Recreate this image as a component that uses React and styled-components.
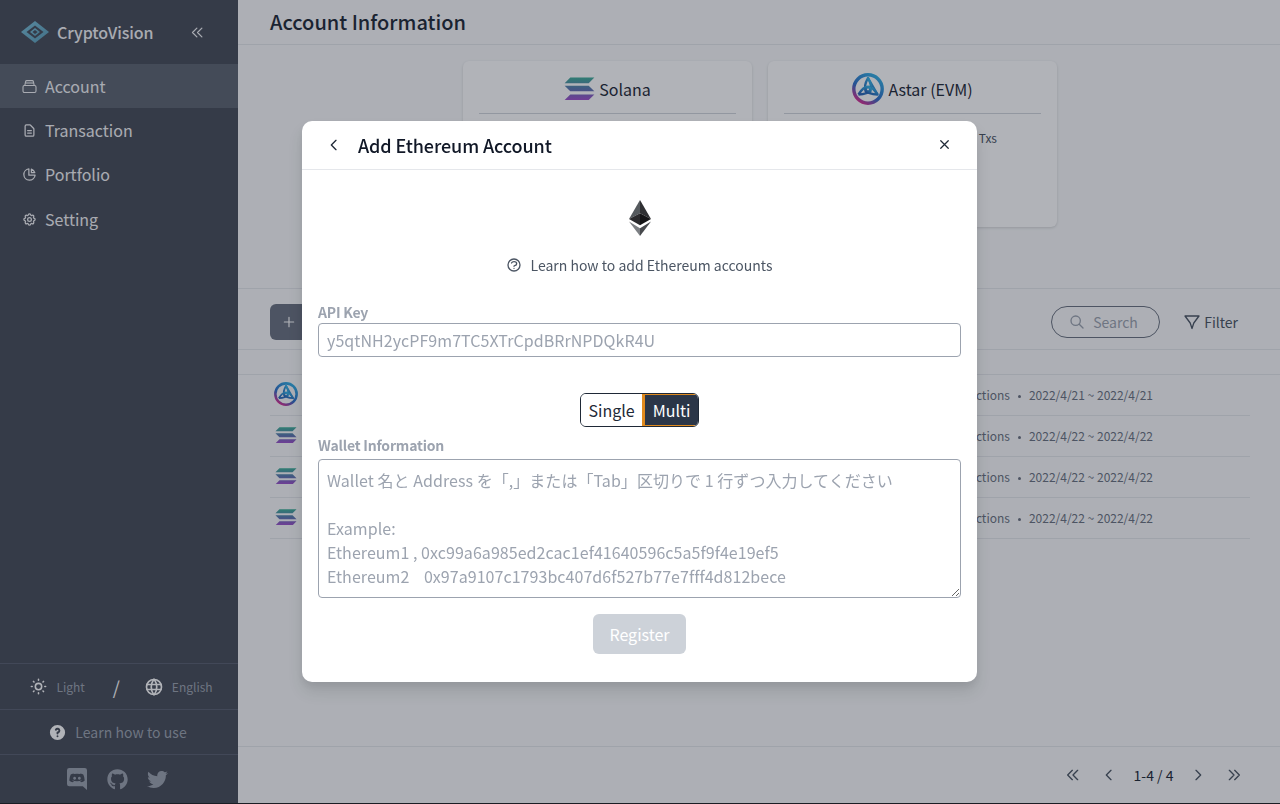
import React from 'react'
import styled, { createGlobalStyle } from 'styled-components'
import { FaGithub, FaTwitter } from 'react-icons/fa'
import {
  HiOutlineChevronDoubleLeft,
  HiOutlineChevronDoubleRight,
  HiOutlineChevronLeft,
  HiOutlineChevronRight,
  HiOutlineDocumentText,
  HiOutlineChartPie,
  HiOutlineCog,
  HiOutlineSun,
  HiOutlineQuestionMarkCircle,
  HiQuestionMarkCircle,
  HiOutlineX,
  HiOutlinePlus,
  HiOutlineSearch,
} from 'react-icons/hi'
import { TbWorld } from 'react-icons/tb'

const FONT = '"Noto Sans CJK JP", "Noto Sans", sans-serif'

const GlobalStyle = createGlobalStyle`
  html, body {
    margin: 0;
    height: 100%;
    background: #1a1d24;
  }
  body {
    font-family: ${FONT};
    color: #1f2937;
    overflow: hidden;
  }
  * {
    box-sizing: border-box;
  }
`

const LogoMark = () => (
  <svg width="28" height="24" viewBox="0 0 28 24">
    <defs>
      <linearGradient id="logoGrad" x1="0" y1="0" x2="1" y2="1">
        <stop offset="0" stopColor="#7cc0d8" />
        <stop offset="1" stopColor="#5a9db8" />
      </linearGradient>
    </defs>
    <path d="M14 1 L28 12 L14 23 L0 12 Z" fill="url(#logoGrad)" />
    <path d="M14 5.5 L22.5 12 L14 18.5 L5.5 12 Z" fill="#474c58" />
    <path d="M14 8 L19 12 L14 16 L9 12 Z" fill="url(#logoGrad)" />
    <path d="M14 10 L16.5 12 L14 14 L11.5 12 Z" fill="#474c58" />
  </svg>
)

const AccountIcon = () => (
  <svg width="15" height="15" viewBox="0 0 15 15" fill="none" stroke="currentColor" strokeWidth="1.1">
    <rect x="1" y="6.5" width="13" height="7" rx="1.4" />
    <path d="M2.8 6.5 L3.6 2.6 Q3.8 1.6 4.8 1.6 H10.2 Q11.2 1.6 11.4 2.6 L12.2 6.5" />
    <path d="M3.4 4 H11.6" />
  </svg>
)

const DiscordIcon = () => (
  <svg width="20" height="22" viewBox="0 0 21 23" fill="currentColor">
    <path
      fillRule="evenodd"
      d="M2.4 0 H18.6 Q21 0 21 2.4 V23 L16.6 19.2 H2.4 Q0 19.2 0 16.8 V2.4 Q0 0 2.4 0 Z
         M6.8 5.6 Q4.9 6 3.9 6.9 Q2.5 9.8 2.4 13.2 Q3.9 14.8 6.3 14.9 L7.2 13.7 Q5.9 13.3 5.2 12.5 Q10.5 15 15.8 12.5 Q15.1 13.3 13.8 13.7 L14.7 14.9 Q17.1 14.8 18.6 13.2 Q18.5 9.8 17.1 6.9 Q16.1 6 14.2 5.6 L13.8 6.3 Q10.5 5.7 7.2 6.3 Z
         M8 9.2 A1.5 1.6 0 1 1 7.99 9.2 Z
         M13 9.2 A1.5 1.6 0 1 1 12.99 9.2 Z"
    />
  </svg>
)

const FilterIcon = () => (
  <svg width="16" height="16" viewBox="0 0 16 16" fill="none" stroke="currentColor" strokeWidth="1.3" strokeLinejoin="round">
    <path d="M1 2 H15 L9.8 9 L8 14.5 L6.2 9 Z" />
  </svg>
)

const SolanaLogo = ({ size = 30 }) => (
  <svg width={size} height={size * 0.76} viewBox="0 0 30 23">
    <defs>
      <linearGradient id="solGrad" x1="0" y1="0" x2="0" y2="1">
        <stop offset="0" stopColor="#3fae98" />
        <stop offset="0.5" stopColor="#5b78b0" />
        <stop offset="1" stopColor="#a04fcc" />
      </linearGradient>
    </defs>
    <path
      d="M6 0.5 H29.5 L24 6 H0.5 Z M0.5 8.5 H24 L29.5 14 H6 Z M6 17 H29.5 L24 22.5 H0.5 Z"
      fill="url(#solGrad)"
    />
  </svg>
)

const AstarLogo = ({ size = 32 }) => (
  <svg width={size} height={size} viewBox="0 0 32 32" fill="none">
    <defs>
      <linearGradient id="astarGrad" x1="0.85" y1="0" x2="0.2" y2="1">
        <stop offset="0" stopColor="#35b4e6" />
        <stop offset="0.6" stopColor="#2f6fc8" />
        <stop offset="1" stopColor="#e02a90" />
      </linearGradient>
      <linearGradient id="astarKnot" x1="0.8" y1="0" x2="0.2" y2="1">
        <stop offset="0" stopColor="#35b4e6" />
        <stop offset="1" stopColor="#2a62b4" />
      </linearGradient>
    </defs>
    <circle cx="16" cy="16" r="14.2" stroke="url(#astarGrad)" strokeWidth="3.4" />
    <g stroke="url(#astarKnot)" strokeWidth="2.4" strokeLinejoin="round">
      <path d="M16 5 Q7 21 25.5 21.5 Q16 5 16 5 Z" />
      <path d="M25.5 21.5 Q16 6 6.5 21.5" />
      <path d="M6.5 21.5 Q25 21 16 5" />
      <circle cx="16" cy="17" r="2.6" />
    </g>
  </svg>
)

const EthLogo = () => (
  <svg width="22" height="36" viewBox="0 0 24 37" preserveAspectRatio="none">
    <path d="M12 0 L0 19.5 L12 13.5 Z" fill="#555a5e" />
    <path d="M12 0 L24 19.5 L12 13.5 Z" fill="#2f3033" />
    <path d="M0 19.5 L12 13.5 V26 Z" fill="#2a2a2d" />
    <path d="M24 19.5 L12 13.5 V26 Z" fill="#141416" />
    <path d="M0 22 L12 37 V29 Z" fill="#7c7f83" />
    <path d="M24 22 L12 37 V29 Z" fill="#47494d" />
  </svg>
)

const NAV = [
  { label: 'Account', Icon: AccountIcon, active: true },
  { label: 'Transaction', Icon: HiOutlineDocumentText },
  { label: 'Portfolio', Icon: HiOutlineChartPie },
  { label: 'Setting', Icon: HiOutlineCog },
]

const ROWS = [
  { Logo: AstarLogo, size: 24, date: '2022/4/21 ~ 2022/4/21' },
  { Logo: SolanaLogo, size: 22, date: '2022/4/22 ~ 2022/4/22' },
  { Logo: SolanaLogo, size: 22, date: '2022/4/22 ~ 2022/4/22' },
  { Logo: SolanaLogo, size: 22, date: '2022/4/22 ~ 2022/4/22' },
]

const PLACEHOLDER = `Wallet 名と Address を「,」または「Tab」区切りで 1 行ずつ入力してください

Example:
Ethereum1 , 0xc99a6a985ed2cac1ef41640596c5a5f9f4e19ef5
Ethereum2\u00a0\u00a0\u00a0\u00a00x97a9107c1793bc407d6f527b77e7fff4d812bece`

const App = () => {
  return (
    <Root>
      <GlobalStyle />
      <Sidebar>
        <Brand>
          <LogoMark />
          <BrandName>CryptoVision</BrandName>
          <Collapse>
            <HiOutlineChevronDoubleLeft size={15} />
          </Collapse>
        </Brand>
        <Nav>
          {NAV.map(({ label, Icon, active }) => (
            <NavItem key={label} $active={active}>
              <NavIcon>
                <Icon size={15} />
              </NavIcon>
              {label}
            </NavItem>
          ))}
        </Nav>
        <SideFooter>
          <PrefRow>
            <PrefItem>
              <HiOutlineSun size={19} />
              Light
            </PrefItem>
            <Slash>/</Slash>
            <PrefItem>
              <TbWorld size={20} />
              English
            </PrefItem>
          </PrefRow>
          <HelpRow>
            <HiQuestionMarkCircle size={19} />
            Learn how to use
          </HelpRow>
          <SocialRow>
            <DiscordIcon />
            <FaGithub size={21} />
            <FaTwitter size={21} />
          </SocialRow>
        </SideFooter>
      </Sidebar>

      <Main>
        <PageHeader>Account Information</PageHeader>
        <CardArea>
          <ChainCard>
            <ChainTitle>
              <SolanaLogo size={31} />
              Solana
            </ChainTitle>
          </ChainCard>
          <ChainCard>
            <ChainTitle>
              <AstarLogo size={32} />
              Astar (EVM)
            </ChainTitle>
            <ChainStats>Txs</ChainStats>
          </ChainCard>
        </CardArea>
        <Toolbar>
          <AddButton>
            <HiOutlinePlus size={14} />
          </AddButton>
          <ToolbarRight>
            <SearchPill>
              <HiOutlineSearch size={16} />
              Search
            </SearchPill>
            <FilterButton>
              <FilterIcon />
              Filter
            </FilterButton>
          </ToolbarRight>
        </Toolbar>
        <TableHead />
        <List>
          {ROWS.map(({ Logo, size, date }, i) => (
            <Row key={i}>
              <RowLogo>
                <Logo size={size} />
              </RowLogo>
              <RowMeta>
                Transactions
                <Dot />
                {date}
              </RowMeta>
            </Row>
          ))}
        </List>
        <Pagination>
          <PageIcon>
            <HiOutlineChevronDoubleLeft size={16} />
          </PageIcon>
          <PageIcon>
            <HiOutlineChevronLeft size={16} />
          </PageIcon>
          <PageCount>1-4 / 4</PageCount>
          <PageIcon>
            <HiOutlineChevronRight size={16} />
          </PageIcon>
          <PageIcon>
            <HiOutlineChevronDoubleRight size={16} />
          </PageIcon>
        </Pagination>
      </Main>

      <Overlay>
        <Modal>
          <ModalHeader>
            <HiOutlineChevronLeft size={16} />
            <ModalTitle>Add Ethereum Account</ModalTitle>
            <CloseButton>
              <HiOutlineX size={15} />
            </CloseButton>
          </ModalHeader>
          <ModalBody>
            <EthWrap>
              <EthLogo />
            </EthWrap>
            <LearnLink>
              <HiOutlineQuestionMarkCircle size={16} />
              Learn how to add Ethereum accounts
            </LearnLink>
            <KeyLabel>API Key</KeyLabel>
            <KeyInput placeholder="y5qtNH2ycPF9m7TC5XTrCpdBRrNPDQkR4U" />
            <ToggleWrap>
              <Toggle>
                <ToggleOption>Single</ToggleOption>
                <ToggleOption $selected>Multi</ToggleOption>
              </Toggle>
            </ToggleWrap>
            <WalletLabel>Wallet Information</WalletLabel>
            <WalletArea placeholder={PLACEHOLDER} />
            <RegisterWrap>
              <RegisterButton disabled>Register</RegisterButton>
            </RegisterWrap>
          </ModalBody>
        </Modal>
      </Overlay>
    </Root>
  )
}

export default App

const Root = styled.div`
  height: 803px;
  display: flex;
  background: #f9fafb;
`
const Sidebar = styled.aside`
  width: 238px;
  flex-shrink: 0;
  display: flex;
  flex-direction: column;
  background: #474c58;
  color: #f3f4f6;
`
const Brand = styled.div`
  height: 64px;
  display: flex;
  align-items: center;
  padding: 0 33px 0 21px;
`
const BrandName = styled.div`
  margin-left: 8px;
  font-size: 16px;
  font-weight: 500;
  letter-spacing: -0.08px;
  color: #f3f4f6;
`
const Collapse = styled.div`
  margin-left: auto;
  display: flex;
`
const Nav = styled.nav`
  display: flex;
  flex-direction: column;
`
const NavItem = styled.div`
  height: 44px;
  display: flex;
  align-items: center;
  padding-left: 22px;
  font-size: 16px;
  background: ${(p) => (p.$active ? '#5d6471' : 'transparent')};
  &:last-child {
    padding-top: 2px;
  }
`
const NavIcon = styled.span`
  display: flex;
  width: 23px;
`
const SideFooter = styled.div`
  margin-top: auto;
  display: flex;
  flex-direction: column;
  color: #9ca3af;
`
const PrefRow = styled.div`
  height: 46px;
  padding-left: 4px;
  border-top: 1px solid #5a6070;
  display: flex;
  align-items: center;
  justify-content: center;
  gap: 28px;
  font-size: 12px;
`
const PrefItem = styled.div`
  display: flex;
  align-items: center;
  gap: 8px;
  svg {
    color: #ffffff;
  }
`
const Slash = styled.span`
  margin-right: -4px;
  color: #ffffff;
  font-size: 18px;
`
const HelpRow = styled.div`
  height: 45px;
  padding-right: 3px;
  border-top: 1px solid #5a6070;
  display: flex;
  align-items: center;
  justify-content: center;
  gap: 8px;
  font-size: 14px;
  letter-spacing: 0.05px;
  svg {
    color: #ffffff;
  }
`
const SocialRow = styled.div`
  height: 49px;
  padding-right: 3px;
  border-top: 1px solid #5a6070;
  display: flex;
  align-items: center;
  justify-content: center;
  gap: 19.5px;
`
const Main = styled.main`
  flex: 1;
  display: flex;
  flex-direction: column;
`
const PageHeader = styled.h1`
  margin: 0;
  height: 45px;
  padding-left: 32px;
  border-bottom: 1px solid #e5e7eb;
  font-size: 20px;
  font-weight: 500;
  line-height: 44px;
`
const CardArea = styled.div`
  height: 244px;
  padding: 16px 0 0 2px;
  display: flex;
  justify-content: center;
  gap: 16px;
  border-bottom: 1px solid #e5e7eb;
`
const ChainCard = styled.div`
  width: 289px;
  height: 166px;
  padding: 0 16px;
  border-radius: 6px;
  background: #ffffff;
  box-shadow: 0 1px 3px rgba(0, 0, 0, 0.15);
`
const ChainTitle = styled.div`
  height: 53px;
  padding-top: 3px;
  display: flex;
  align-items: center;
  justify-content: center;
  gap: 4px;
  font-size: 16px;
  border-bottom: 1px solid #d1d5db;
`
const ChainStats = styled.div`
  padding: 15px 44px 0 0;
  text-align: right;
  font-size: 12px;
  color: #4b5563;
`
const Toolbar = styled.div`
  height: 61px;
  padding: 6px 42px 0 32px;
  display: flex;
  align-items: center;
  justify-content: space-between;
  border-bottom: 1px solid #e5e7eb;
`
const AddButton = styled.div`
  width: 60px;
  height: 36px;
  padding: 0 12px;
  display: flex;
  align-items: center;
  border-radius: 6px;
  background: #6b7280;
  color: #ffffff;
`
const ToolbarRight = styled.div`
  display: flex;
  align-items: center;
  gap: 24px;
`
const SearchPill = styled.div`
  width: 109px;
  height: 32px;
  padding-left: 17px;
  display: flex;
  align-items: center;
  gap: 8px;
  border: 1px solid #6b7280;
  border-radius: 16px;
  color: #9ca3af;
  font-size: 14px;
`
const FilterButton = styled.div`
  display: flex;
  align-items: center;
  gap: 4px;
  font-size: 14px;
  color: #4b5563;
`
const TableHead = styled.div`
  height: 25px;
  flex-shrink: 0;
  border-bottom: 1px solid #e5e7eb;
`
const List = styled.div`
  flex: 1;
  padding: 0 30px 0 32px;
`
const Row = styled.div`
  height: 41px;
  display: flex;
  align-items: center;
  justify-content: space-between;
  padding: 0 97px 2px 4px;
  border-bottom: 1px solid #e5e7eb;
`
const RowLogo = styled.div`
  width: 24px;
  display: flex;
  justify-content: center;
`
const RowMeta = styled.div`
  font-size: 12px;
  color: #6b7280;
`
const Dot = styled.span`
  display: inline-block;
  width: 3px;
  height: 3px;
  margin: 0 8px;
  border-radius: 50%;
  vertical-align: middle;
  background: #6b7280;
`
const Pagination = styled.div`
  height: 57px;
  flex-shrink: 0;
  padding-right: 28px;
  display: flex;
  align-items: center;
  justify-content: flex-end;
  border-top: 1px solid #e5e7eb;
`
const PageIcon = styled.span`
  width: 36px;
  display: flex;
  justify-content: center;
  color: #4b5563;
`
const PageCount = styled.span`
  width: 53px;
  text-align: center;
  font-size: 14px;
`
const Overlay = styled.div`
  position: fixed;
  top: 0;
  left: 0;
  width: 100%;
  height: 803px;
  display: flex;
  align-items: center;
  justify-content: center;
  background: rgba(17, 24, 39, 0.33);
  backdrop-filter: blur(0.5px);
`
const Modal = styled.div`
  width: 675px;
  height: 561px;
  margin: 0 1px 0 0;
  border-radius: 10px;
  background: #ffffff;
  box-shadow: 0 10px 15px rgba(0, 0, 0, 0.1), 0 4px 6px rgba(0, 0, 0, 0.05);
`
const ModalHeader = styled.div`
  height: 49px;
  padding: 0 25px 1px 24px;
  display: flex;
  align-items: center;
  border-bottom: 1px solid #e5e7eb;
`
const ModalTitle = styled.div`
  margin-left: 16px;
  font-size: 18px;
  font-weight: 500;
  letter-spacing: -0.1px;
  color: #111827;
`
const CloseButton = styled.div`
  margin-left: auto;
  display: flex;
`
const ModalBody = styled.div`
  padding: 30px 16px 0;
`
const EthWrap = styled.div`
  display: flex;
  justify-content: center;
`
const LearnLink = styled.div`
  margin-top: 19px;
  display: flex;
  justify-content: center;
  align-items: center;
  gap: 8px;
  font-size: 14px;
  color: #4b5563;
`
const KeyLabel = styled.div`
  margin: 27px 0 1px;
  font-size: 14px;
  font-weight: 600;
  letter-spacing: -0.2px;
  line-height: 20px;
  color: #9ca3af;
`
const WalletLabel = styled(KeyLabel)`
  margin: 25px 0 4px;
`
const KeyInput = styled.input`
  display: block;
  width: 100%;
  height: 34px;
  padding: 0 8px;
  border: 1px solid #9ca3af;
  border-radius: 4px;
  font-family: ${FONT};
  font-size: 16px;
  letter-spacing: 0.06px;
  &::placeholder {
    color: #9ca3af;
    opacity: 1;
  }
`
const ToggleWrap = styled.div`
  margin-top: 36px;
  margin-bottom: -17px;
  display: flex;
  justify-content: center;
`
const Toggle = styled.div`
  height: 34px;
  display: flex;
  border: 1px solid #1f2937;
  border-radius: 6px;
  overflow: hidden;
`
const ToggleOption = styled.div`
  padding: ${(p) => (p.$selected ? '0 8px 0 8px' : '0 7px 0 8px')};
  display: flex;
  align-items: center;
  font-size: 16px;
  color: ${(p) => (p.$selected ? '#ffffff' : '#1f2937')};
  background: ${(p) => (p.$selected ? '#2b3648' : '#ffffff')};
  ${(p) => p.$selected && 'border: 1px solid #e08a1e; border-left-width: 3px; border-right: none;'}
`
const WalletArea = styled.textarea`
  display: block;
  width: 100%;
  height: 139px;
  padding: 8px 8px;
  border: 1px solid #9ca3af;
  border-radius: 4px;
  font-family: ${FONT};
  font-size: 16px;
  line-height: 24px;
  letter-spacing: 0.05px;
  &::placeholder {
    color: #9ca3af;
    opacity: 1;
  }
`
const RegisterWrap = styled.div`
  margin-top: 16px;
  display: flex;
  justify-content: center;
`
const RegisterButton = styled.button`
  width: 93px;
  height: 40px;
  border: none;
  border-radius: 6px;
  background: #cdd2d9;
  color: #ffffff;
  font-family: ${FONT};
  font-size: 16px;
  font-weight: 400;
`
